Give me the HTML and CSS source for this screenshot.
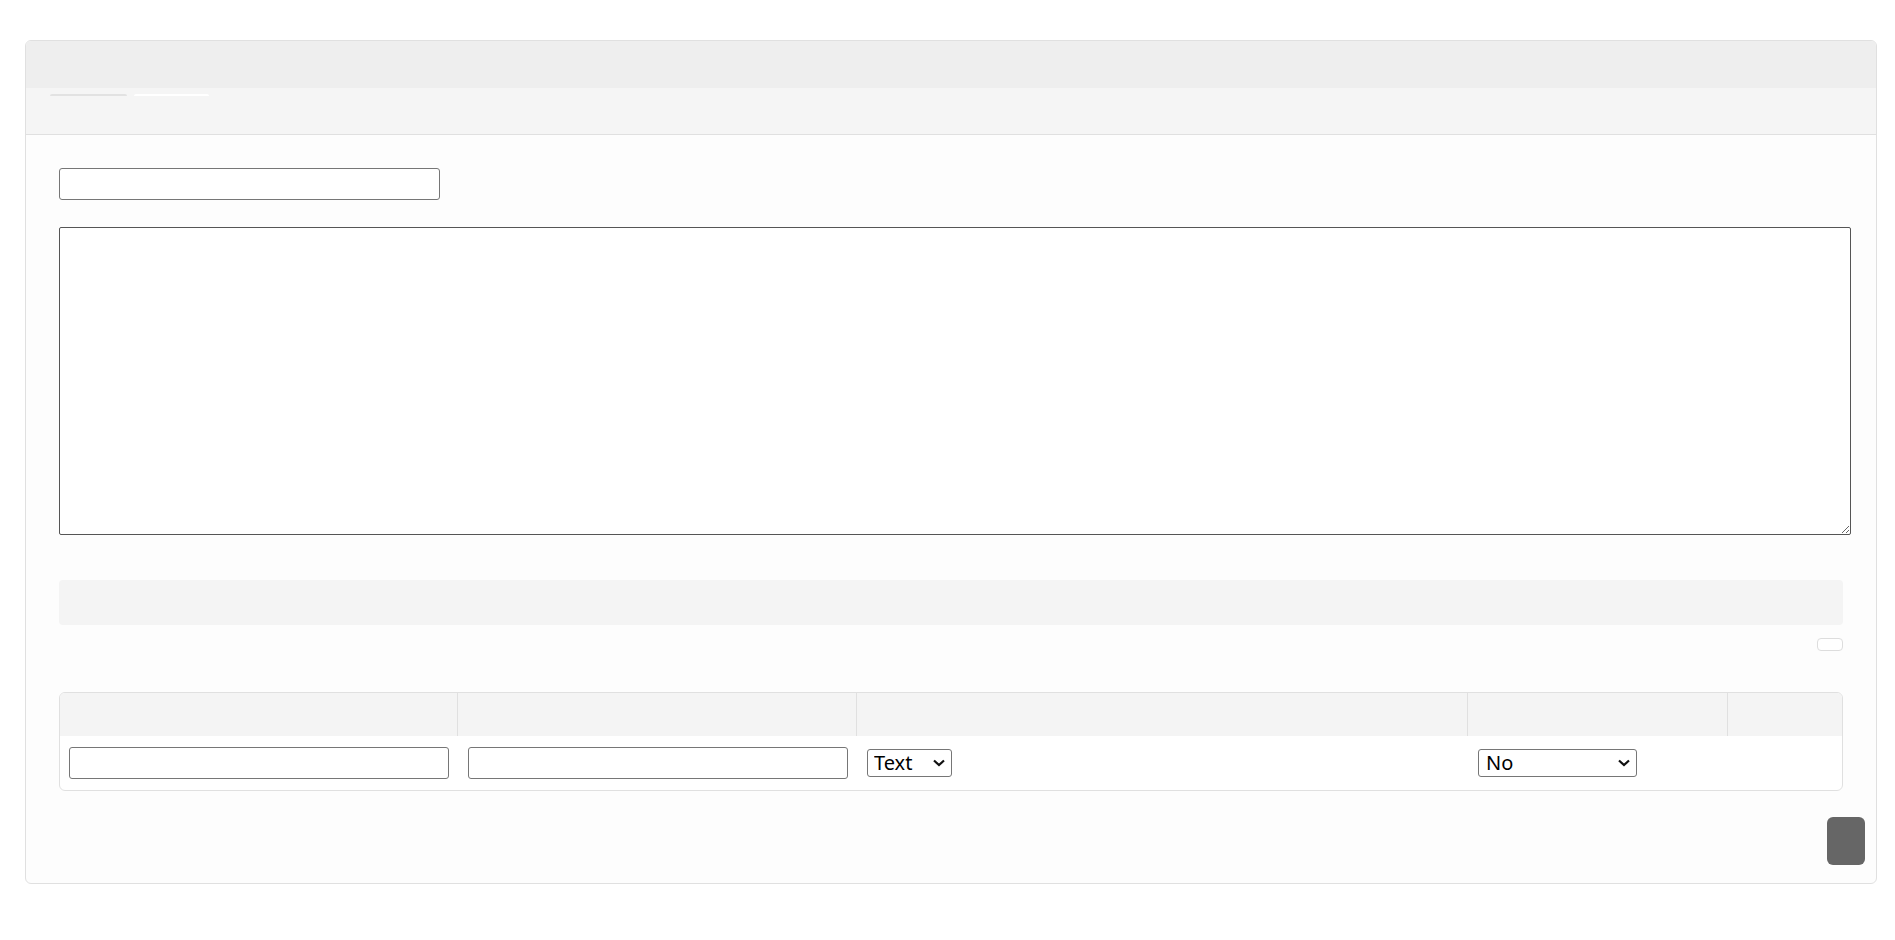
FILE: index.html
```html
<!DOCTYPE html>
<html>
<head>
<meta charset="utf-8">
<link rel="stylesheet" href="styles.css">
</head>
<body>
<div class="card">
  <div class="card-header"></div>
  <div class="tabs">
    <div class="tab tab-active"></div>
    <div class="tab tab-plain"></div>
  </div>
  <div class="card-body">
    <input class="field name-field" type="text">
    <textarea class="editor"></textarea>
    <div class="info-bar"></div>
    <div class="tools"><button class="mini-btn"></button></div>
    <div class="grid-table">
      <div class="th"></div>
      <div class="th"></div>
      <div class="th"></div>
      <div class="th"></div>
      <div class="th last"></div>
      <div class="td"><input class="field cell-field" type="text"></div>
      <div class="td"><input class="field cell-field" type="text"></div>
      <div class="td">
        <span class="sel-wrap">
          <select class="sel sel-type"><option>Text</option></select>
          <svg class="chev" width="12" height="8" viewBox="0 0 12 8"><path d="M1 1.5 L6 6 L11 1.5" fill="none" stroke="#111" stroke-width="2.2"/></svg>
        </span>
      </div>
      <div class="td">
        <span class="sel-wrap">
          <select class="sel sel-yn"><option>No</option></select>
          <svg class="chev" width="12" height="8" viewBox="0 0 12 8"><path d="M1 1.5 L6 6 L11 1.5" fill="none" stroke="#111" stroke-width="2.2"/></svg>
        </span>
      </div>
      <div class="td"></div>
    </div>
    <div class="footer"><button class="save-btn"></button></div>
  </div>
</div>
</body>
</html>
```

FILE: styles.css
```css
html, body {
  margin: 0;
  padding: 0;
  background: #ffffff;
  font-family: "Noto Sans", "Open Sans", sans-serif;
}

.card {
  margin: 40px 0 0 25px;
  width: 1850px;
  border: 1px solid #e0e0e0;
  border-radius: 6px;
  background: #fdfdfd;
  overflow: hidden;
}

.card-header {
  height: 47px;
  background: #eeeeee;
}

.tabs {
  height: 47px;
  background: #f5f5f5;
  border-bottom: 1px solid #e0e0e0;
  display: flex;
  gap: 7px;
  padding: 6px 0 0 24px;
  box-sizing: border-box;
}

.tab {
  height: 2px;
  border-radius: 3px 3px 0 0;
}

.tab-active {
  width: 77px;
  background: #e2e2e2;
}

.tab-plain {
  width: 75px;
  background: #ffffff;
}

.card-body {
  padding: 33px 33px 18px 33px;
  display: flex;
  flex-direction: column;
}

.field {
  box-sizing: border-box;
  height: 32px;
  width: 381px;
  border: 1px solid #767676;
  border-radius: 3px;
  background: #ffffff;
  margin: 0;
  padding: 0 4px;
}

.editor {
  box-sizing: border-box;
  margin: 27px 0 0 0;
  width: 1792px;
  height: 308px;
  border: 1px solid #555555;
  border-radius: 2px;
  background: #ffffff;
  resize: vertical;
  display: block;
}

.info-bar {
  margin-top: 45px;
  height: 45px;
  background: #f4f4f4;
  border-radius: 4px;
}

.tools {
  display: flex;
  justify-content: flex-end;
  margin-top: 13px;
}

.mini-btn {
  width: 26px;
  height: 13px;
  padding: 0;
  border: 1px solid #dddddd;
  border-radius: 4px;
  background: #ffffff;
}

.grid-table {
  margin-top: 41px;
  display: grid;
  grid-template-columns: 398px 399px 611px 260px 1fr;
  border: 1px solid #e0e0e0;
  border-radius: 6px;
  overflow: hidden;
  background: #ffffff;
}

.th {
  height: 43px;
  background: #f4f4f4;
  border-right: 1px solid #e0e0e0;
}

.th.last {
  border-right: none;
}

.td {
  height: 54px;
  padding: 0 9px;
  display: flex;
  align-items: center;
}

.td + .td {
  padding-left: 10px;
}

.sel-wrap {
  position: relative;
  display: inline-flex;
}

.sel {
  box-sizing: border-box;
  height: 28px;
  border: 1px solid #767676;
  border-radius: 3px;
  background: #ffffff;
  font-family: "Noto Sans", sans-serif;
  font-size: 20px;
  line-height: 26px;
  color: #000;
  padding: 0 0 0 6px;
  margin: 0;
  appearance: none;
  -webkit-appearance: none;
}

.chev {
  position: absolute;
  right: 7px;
  top: 10px;
  pointer-events: none;
}

.sel-type {
  width: 85px;
}

.sel-yn {
  width: 159px;
  padding-left: 7px;
}

.footer {
  display: flex;
  justify-content: flex-end;
  margin: 26px -22px 0 0;
}

.save-btn {
  width: 38px;
  height: 48px;
  border: none;
  border-radius: 6px;
  background: #666666;
  padding: 0;
}
```
